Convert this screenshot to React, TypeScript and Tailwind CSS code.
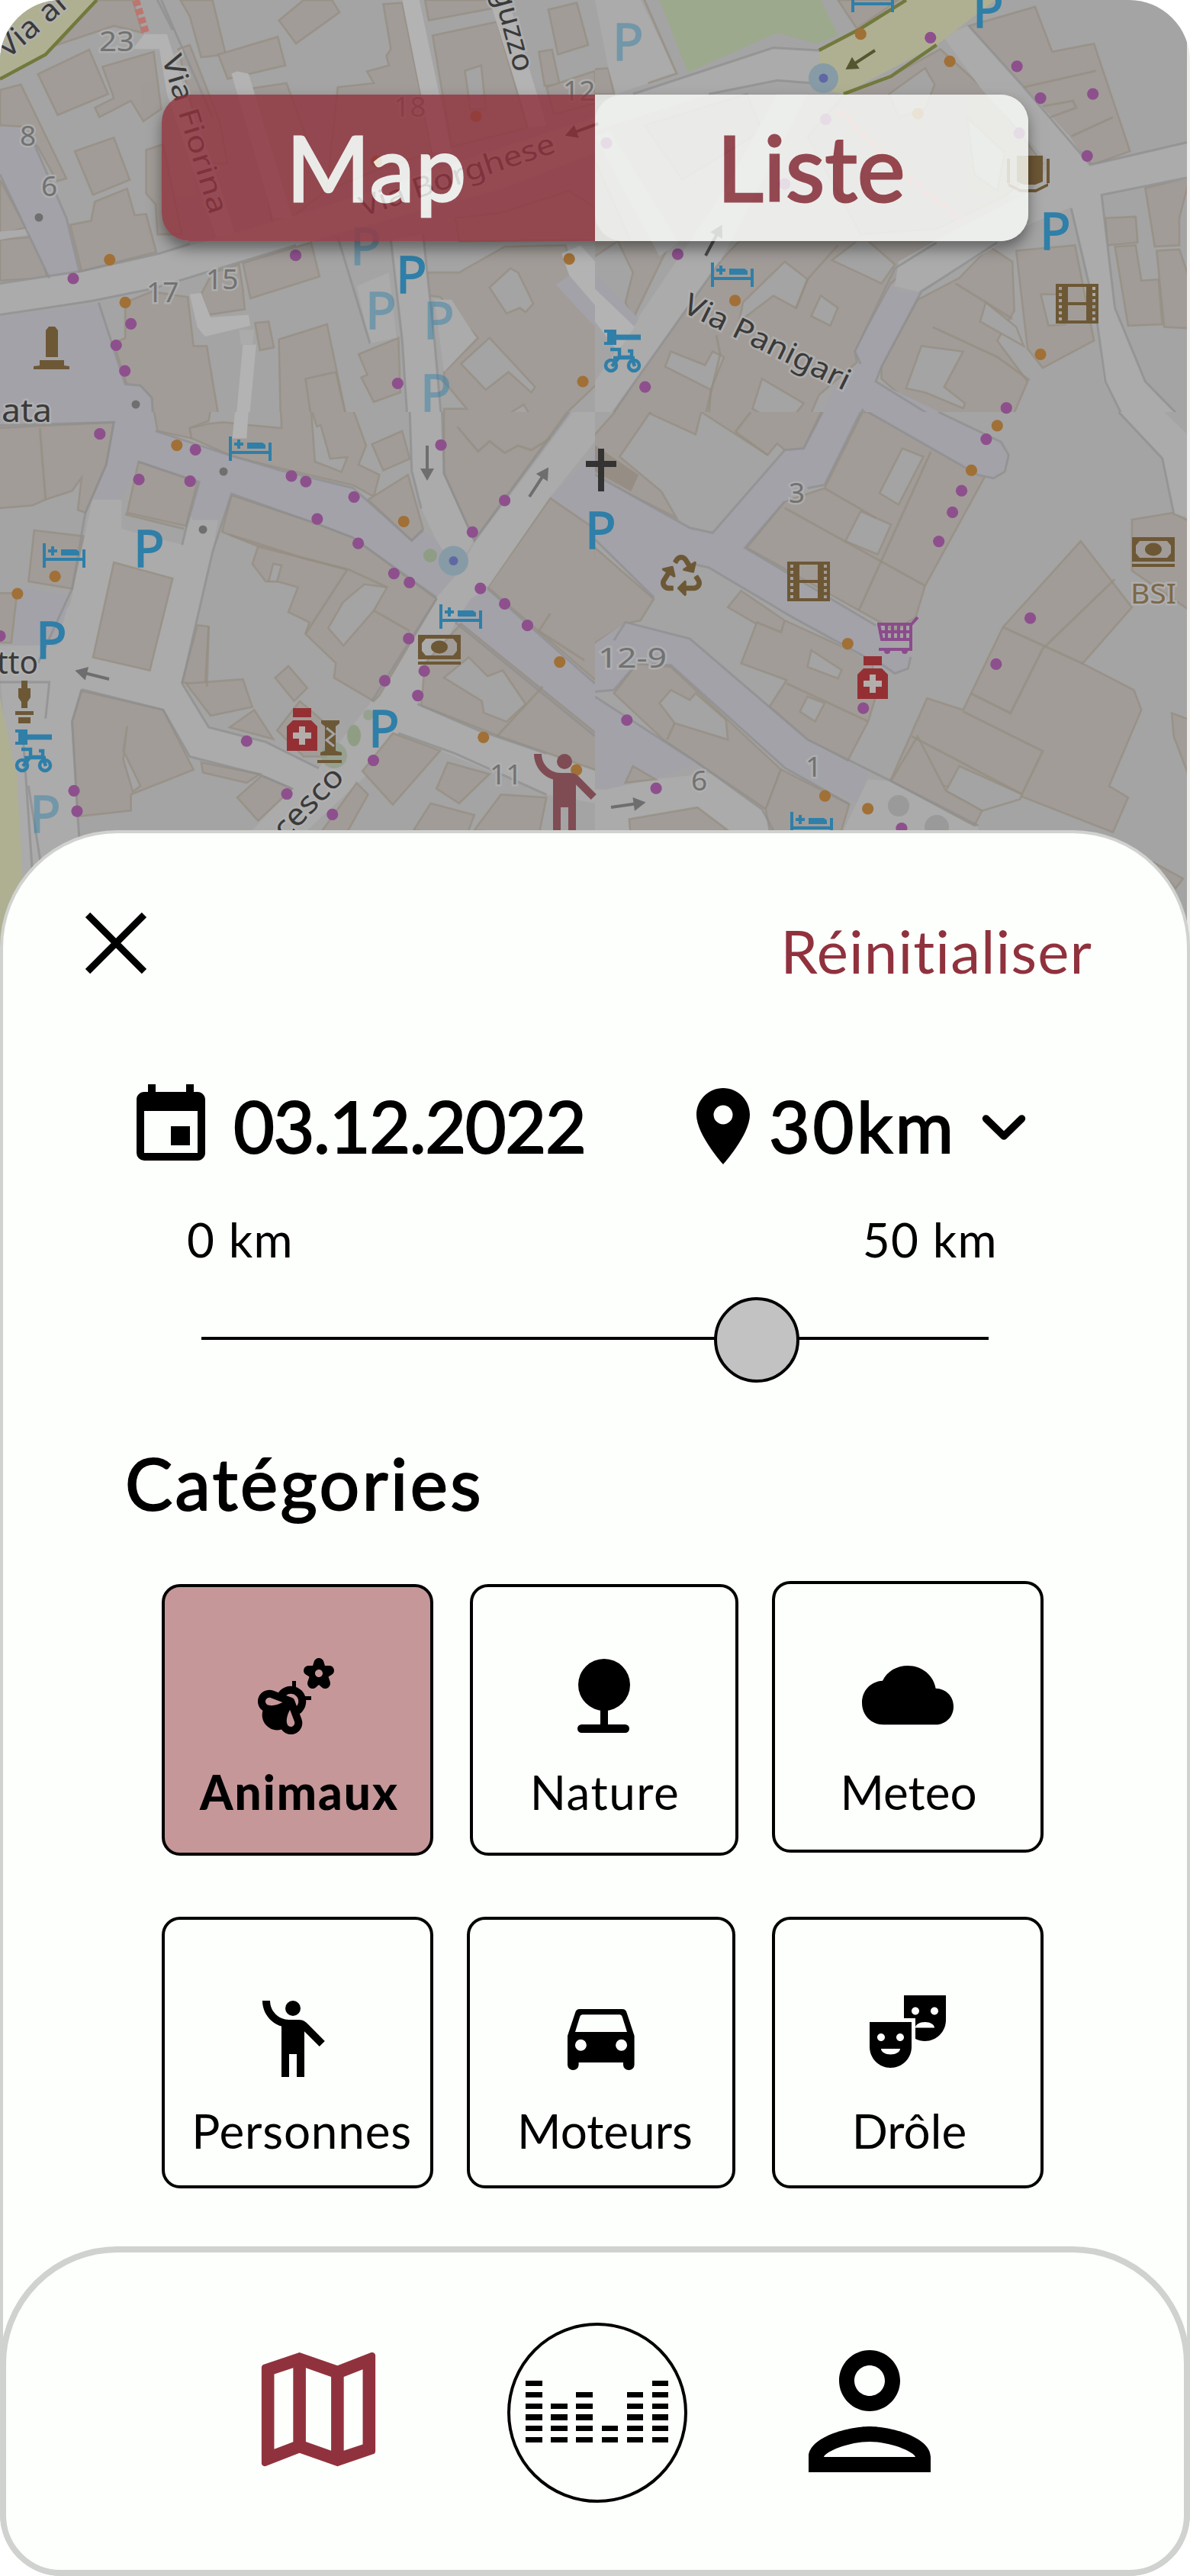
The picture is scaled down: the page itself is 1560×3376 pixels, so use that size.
import type { ReactNode } from "react";
import {
  MdEmojiNature,
  MdEmojiPeople,
  MdEvent,
  MdLocationOn,
  MdOutlineMap,
  MdTheaterComedy,
} from "react-icons/md";
import { FaRecycle } from "react-icons/fa";

/* ---------- map ---------- */

const FILL = {
  building: "#a19c98",
  court: "#a4a4a4",
  road: "#ababab",
  lane: "#b3b3b3",
  square: "#a3a2a9",
  green: "#9ca98c",
  main: "#afb092",
  church: "#968e84",
};
const LINE = { building: "#958d82", square: "#8f8f90", olive: "#72793c" };

type Kind = keyof typeof FILL;
type Pt = [number, number];
type Tile = {
  x: number;
  y: number;
  sx: number;
  sy: number;
  h: number;
  shapes: [Kind, string][];
  lines: [string, string][];
  purple: Pt[];
  orange: Pt[];
};

const S = 780 / 1568;

const tiles: Tile[] = [
  {
    x: 0,
    y: 0,
    sx: S,
    sy: 560 / 1568,
    h: 540,
    shapes: [
      ["building", "100,272 235,182 285,345 152,422"],
      ["building", "270,245 405,190 425,400 378,445 345,370 262,430 250,395 300,360"],
      ["building", "0,330 55,310 175,655 150,665 100,540 60,465 0,460"],
      ["building", "197,555 300,505 342,660 245,715"],
      ["building", "185,825 240,810 250,740 335,692 355,790 385,785 412,925 215,995"],
      ["building", "150,165 255,0 350,0 375,120 300,95"],
      ["building", "475,0 560,0 595,200 530,210 500,60"],
      ["building", "470,180 500,165 580,450 600,600 540,600"],
      ["building", "575,200 732,135 752,240 600,290"],
      ["building", "735,75 800,0 875,0 895,45 780,160"],
      ["building", "660,325 755,305 860,700 720,850"],
      ["building", "890,320 985,305 967,262 1025,240 1018,205 1030,180 1010,15 1060,10 1140,560 1000,620 860,700"],
      ["building", "1130,75 1120,0 1290,0 1300,30"],
      ["building", "1140,130 1310,80 1390,470 1190,540"],
      ["court", "1225,260 1268,240 1280,400 1240,400"],
      ["building", "1445,35 1520,10 1550,165 1470,200"],
      ["building", "1420,190 1455,182 1475,310 1435,315"],
      ["building", "1568,260 1440,320 1460,420 1568,380"],
      ["building", "385,550 430,530 480,860 415,860 410,750 385,710"],
      ["building", "0,660 68,835 0,860"],
      ["building", "0,880 95,868 125,1020 0,1030"],
      ["building", "640,965 820,890 842,1015 660,1095"],
      ["building", "330,1110 400,1070 495,1090 510,1270 545,1270 575,1520 555,1530 555,1580 405,1580 400,1460 370,1415 335,1415 300,1260 330,1240"],
      ["building", "550,1155 530,1080 560,1000 630,970 640,1060 645,1135"],
      ["building", "672,1185 708,1180 722,1275 685,1285"],
      ["building", "735,1245 862,1190 920,1580 740,1580"],
      ["building", "805,1390 885,1365 920,1580 825,1580"],
      ["building", "945,1300 1050,1240 1055,1440 985,1475 952,1385 968,1375"],
      ["building", "1125,1000 1210,1000 1330,905 1490,900 1500,950 1580,1190 1580,1400 1490,1520 1475,1580 1170,1580 1170,1500 1230,1500 1170,1400 1170,1365 1260,1240 1200,1150 1160,1090 1130,1085"],
      ["court", "1290,1055 1345,985 1365,1000 1390,1070 1405,1115 1385,1145 1370,1130 1335,1150"],
      ["court", "1215,1335 1290,1240 1410,1420 1400,1440 1340,1365 1280,1430"],
      ["court", "1345,1515 1380,1485 1400,1530 1370,1568 1345,1550"],
      ["building", "1200,800 1320,780 1500,700 1568,760 1568,880 1210,885"],
      ["square", "0,465 75,480 175,800 210,1010 130,1020 65,830 0,640"],
      ["square", "0,1160 260,1115 330,1410 370,1415 400,1460 405,1568 300,1568 300,1550 0,1550"],
      ["road", "0,1035 210,1000 420,935 850,760 1568,430 1568,560 1330,690 880,860 630,965 400,1060 240,1100 0,1160"],
      ["lane", "350,180 380,125 440,125 490,345 560,600 620,860 570,870 440,345 420,180"],
      ["lane", "610,270 625,262 655,270 770,800 720,800"],
      ["lane", "1060,0 1105,0 1190,560 1140,560"],
      ["lane", "1290,0 1340,0 1440,460 1395,470"],
      ["lane", "500,1080 530,1075 555,1165 655,1155 660,1195 540,1235 520,1200"],
      ["lane", "640,1265 675,1265 655,1568 620,1568"],
      ["road", "630,1210 670,1210 665,1265 635,1265"],
      ["road", "1030,880 1115,860 1145,1250 1165,1568 1075,1568 1060,1250"],
      ["road", "940,1050 1025,1000 1045,1240 975,1260"],
      ["road", "1145,1100 1190,1100 1255,1240 1170,1365"],
      ["square", "1465,1045 1500,1010 1568,1100 1568,1200"],
      ["lane", "1480,930 1530,900 1568,960 1568,1120 1500,1010"],
      ["road", "0,850 75,840 75,860 0,880"],
      ["main", "0,0 255,0 120,200 0,285"],
    ],
    lines: [
      ["olive", "255,0 120,200 0,290"],
      ["square", "0,1040 215,995 420,930 500,895"],
      ["square", "0,1155 240,1105 400,1060 780,900"],
      ["square", "75,480 175,800 210,1000"],
      ["square", "0,640 65,830 130,1020"],
      ["square", "260,1110 330,1410 370,1415 400,1460 405,1568"],
      ["square", "0,1548 300,1550"],
      ["square", "1030,880 1060,1250 1075,1568"],
      ["square", "1115,860 1145,1250 1165,1568"],
      ["square", "415,0 455,110"],
      ["square", "425,0 560,430"],
      ["square", "890,870 975,1260"],
    ],
    purple: [[779, 937], [193, 1022], [345, 1188], [306, 1267], [329, 1361], [1048, 1407]],
    orange: [[289, 953], [330, 1110], [1500, 950], [1536, 1400], [1254, 427], [992, 592]],
  },
  {
    x: 780,
    y: 0,
    sx: S,
    sy: 560 / 1568,
    h: 540,
    shapes: [
      ["green", "170,0 595,0 640,130 585,160 480,120 245,265"],
      ["building", "640,0 800,0 690,105"],
      ["building", "-10,255 35,250 50,345 -10,345"],
      ["road", "0,0 120,0 215,270 55,345 35,250"],
      ["road", "0,370 100,345 470,175 590,185 600,300 480,295 300,345 0,480"],
      ["building", "985,95 1160,25 1205,190 1315,160 1410,555 1310,605 1130,320"],
      ["building", "660,345 780,280 910,180 1040,345 1180,600 1080,720 900,840 700,860 560,500"],
      ["court", "775,345 870,250 895,310 870,400 800,430"],
      ["court", "980,430 1080,560 1060,700 1000,640"],
      ["building", "130,460 400,345 440,480 230,660"],
      ["building", "-10,560 100,900 60,885 -10,950"],
      ["building", "60,885 200,885 100,1170 80,1110 100,1000"],
      ["building", "240,1090 380,885 900,885 780,1040 685,1290 690,1330 590,1450 550,1580 20,1580 150,1300"],
      ["court", "500,960 560,1025 530,1130 470,1085 380,1180 390,1110"],
      ["court", "595,1085 640,1130 620,1195 570,1160"],
      ["court", "720,885 790,970 755,1040 625,955 690,885"],
      ["court", "200,1290 290,1340 310,1290 340,1310 305,1430 185,1345"],
      ["court", "440,1390 550,1480 500,1568 415,1500"],
      ["building", "1040,905 1100,960 1105,1140 1060,1250 1140,1400 1085,1580 910,1580 755,1390 755,1345 850,1100 960,1020"],
      ["court", "1030,1110 1110,1200 1130,1270 1015,1180"],
      ["court", "860,1270 970,1290 920,1420 975,1480 970,1498 870,1440 820,1425"],
      ["building", "1110,920 1265,900 1315,1250 1180,1350 1140,1280"],
      ["court", "1175,1080 1240,1080 1240,1190 1195,1195"],
      ["building", "1345,800 1425,795 1430,890 1350,900"],
      ["building", "1370,905 1425,900 1440,1030 1485,1025 1495,1190 1405,1195"],
      ["building", "1450,690 1568,650 1540,800 1540,900 1475,905"],
      ["building", "1480,920 1540,915 1568,1030 1568,1205 1500,1200"],
      ["road", "915,130 985,95 1250,500 1305,605 1568,520 1568,655 1335,715 1370,1130 1450,1400 1568,1568 1405,1568 1340,1400 1320,1150 1255,760 1150,820 1100,870 850,1070 790,1050 800,960 900,880 1150,700 1200,600 1020,330"],
      ["square", "780,1045 800,1070 860,1070 755,1345 740,1400 935,1530 960,1568 745,1568 705,1505 680,1568 580,1568 640,1400 700,1330 685,1290"],
      ["road", "0,1400 340,700 480,345 560,345 330,960 20,1568 0,1568"],
      ["square", "0,1000 115,1170 95,1220 0,1060"],
      ["lane", "0,1060 105,1200 60,1290 0,1180"],
      ["road", "0,500 40,480 220,890 170,940"],
      ["main", "820,0 1055,0 900,165 655,345 600,330 590,185"],
    ],
    lines: [
      ["olive", "820,0 700,105 590,185"],
      ["olive", "900,165 780,280 655,345"],
      ["square", "100,345 470,175 590,185"],
      ["square", "300,345 480,295 570,305"],
      ["square", "985,95 1130,320 1305,605 1568,520"],
      ["square", "1568,650 1335,715 1370,1130 1450,1400 1568,1568"],
      ["square", "1255,765 1320,1150 1345,1400 1405,1568"],
      ["square", "1060,890 860,1070 755,1345 740,1400 935,1568"],
      ["square", "900,890 790,985 685,1290 700,1335"],
      ["square", "745,1568 705,1505 680,1568"],
      ["square", "330,960 20,1568"],
      ["building", "130,0 215,270 140,305"],
      ["building", "1130,320 1320,260"],
      ["building", "1255,500 1365,430"],
      ["building", "1180,390 1260,370 1268,395 1200,430"],
      ["building", "530,1130 560,1025 640,900"],
      ["building", "320,1230 330,1300 290,1530"],
      ["building", "305,1430 300,1530 350,1568"],
      ["building", "890,1200 1060,1310 1145,1395"],
      ["building", "950,1040 1100,1170"],
    ],
    purple: [[884, 138], [1112, 243], [1174, 360], [1312, 345], [1297, 572], [218, 933], [132, 1420], [1084, 1497], [30, 525], [608, 438], [1118, 488], [500, 675]],
    orange: [[700, 125], [935, 225], [851, 417], [369, 1103], [1174, 1300]],
  },
  {
    x: 0,
    y: 540,
    sx: S,
    sy: 600 / 1568,
    h: 720,
    shapes: [
      ["road", "245,290 320,300 320,400 480,455 500,360 575,370 560,480 480,930 550,1080 700,1130 840,1220 980,990 1100,700 1150,635 1200,560 1250,450 1510,0 1568,0 1568,100 1450,290 1285,600 1200,720 1100,1000 1260,1090 1440,1170 1568,1230 1568,1340 1440,1310 1050,1100 960,1250 810,1432 665,1432 770,1290 680,1240 500,1180 430,1020 215,950 190,1060 205,1390 225,1850 65,1850 0,900 0,800 100,800 185,660"],
      ["road", "1080,0 1165,0 1170,210 1250,440 1200,540 1150,440 1110,330 1085,200"],
      ["square", "300,0 405,0 410,65 610,150 740,200 930,260 1085,440 1115,405 1150,440 1200,560 1150,635 930,430 840,385 610,280 575,370 505,370 525,240 365,170 320,300 245,300 300,30"],
      ["square", "0,0 300,0 300,35 0,48"],
      ["square", "1285,605 1568,930 1568,1110 1200,720 1240,640"],
      ["square", "1450,290 1568,140 1568,400"],
      ["square", "50,600 185,630 150,800 35,795"],
      ["building", "-10,55 300,35 280,180 225,345 205,335 215,225 190,270 120,300 85,320 -10,330"],
      ["building", "365,170 520,240 490,390 335,345"],
      ["building", "90,405 220,425 190,605 75,580"],
      ["building", "-10,620 45,620 30,790 -10,790"],
      ["building", "300,515 455,570 395,885 245,840"],
      ["building", "610,285 840,385 930,430 1150,640 1000,970 985,990 880,910 885,860 805,760 815,720 760,685 785,600 730,580 700,580 665,520 680,460 585,410"],
      ["court", "865,740 905,650 960,590 1020,600 985,680 905,800"],
      ["court", "708,580 720,520 742,525 730,580"],
      ["building", "520,730 550,735 540,940 480,925"],
      ["building", "490,930 640,915 665,1010 555,1040"],
      ["building", "725,910 760,870 810,945 775,990"],
      ["building", "605,1080 670,1020 720,1120"],
      ["building", "730,1090 790,990 870,1080 860,1180 800,1180"],
      ["building", "215,955 430,1020 510,1225 345,1310 345,1365 205,1385 190,1060"],
      ["court", "335,1075 325,1160 370,1280 350,1300 325,1190"],
      ["building", "405,-10 555,-10 550,30 500,55 505,90 415,65"],
      ["building", "740,-10 930,-10 965,115 945,180 1000,215 985,290 930,250 730,190 610,150 505,90 500,55 550,40 590,35 660,45 742,55"],
      ["lane", "620,-10 655,-10 650,90 612,90"],
      ["court", "820,-10 835,50 845,45 870,160 915,155 900,205 830,170"],
      ["building", "980,110 1060,65 1080,160 1010,200"],
      ["building", "970,300 1075,215 1115,400 1085,440"],
      ["building", "1170,-10 1500,-10 1250,440 1170,210"],
      ["building", "1450,295 1568,400 1580,930 1285,600"],
      ["building", "1215,725 1580,1110 1580,1230 1315,1110 1110,1005 1120,860"],
      ["court", "1170,910 1235,840 1285,905 1325,885 1385,1000 1335,1060 1275,1030 1270,990"],
      ["building", "530,1200 685,1240 650,1270 535,1235"],
      ["building", "625,1320 690,1245 770,1290 680,1400"],
      ["building", "955,1230 1035,1100 1160,1160 1035,1345"],
      ["building", "1150,1290 1180,1200 1290,1240 1210,1340"],
      ["building", "1135,1340 1250,1380 1230,1450 1090,1432"],
      ["building", "1320,1310 1440,1320 1420,1450 1250,1432"],
      ["building", "840,1450 940,1270 970,1310 910,1450"],
      ["road", "1510,0 1568,0 1568,100 1450,290 1285,600 1250,450"],
      ["main", "0,980 45,1250 70,1850 0,1850"],
    ],
    lines: [
      ["square", "0,46 300,35 280,180 225,345 190,605 100,860"],
      ["square", "410,65 610,150 740,200 930,260 1085,440 1115,405"],
      ["square", "1150,635 930,430 840,385 610,280 560,480 480,930 550,1080 700,1130 840,1220"],
      ["square", "365,170 525,240 490,400 480,455"],
      ["square", "215,950 430,1020 500,1180 680,1240 770,1290"],
      ["square", "1080,0 1085,200 1110,330"],
      ["square", "1165,0 1170,210 1250,440 1500,0"],
      ["square", "1285,605 1568,930"],
      ["square", "1200,720 1568,1110"],
      ["square", "1150,640 980,990"],
      ["square", "1100,1000 1260,1090 1440,1170"],
      ["square", "1050,1100 1200,1170 1440,1310"],
      ["square", "215,950 190,1060 205,1390 215,1568"],
      ["square", "60,1100 85,1568"],
      ["square", "75,1280 110,1568"],
      ["square", "0,925 130,925 120,1050"],
      ["building", "1205,50 1260,135 1290,100 1330,140 1365,115 1400,130 1450,90"],
      ["building", "105,55 120,300"],
      ["building", "680,460 915,540 805,760"],
      ["building", "985,680 1080,750"],
      ["building", "330,350 485,400"],
      ["building", "605,420 800,500 920,540 1020,600"],
      ["building", "1450,690 1420,750 1540,850"],
      ["building", "1430,940 1310,1110"],
      ["building", "550,735 545,940"],
    ],
    purple: [[263, 75], [515, 129], [366, 231], [501, 237], [768, 219], [806, 238], [933, 291], [836, 366], [944, 450], [1038, 553], [1079, 584], [1162, 113], [1330, 303], [1245, 411], [1266, 604], [1330, 657], [1390, 731], [1077, 776], [1118, 887], [1014, 920], [1101, 971], [650, 1127], [984, 1193], [756, 1308], [876, 1378], [195, 1297], [203, 1367], [0, 767]],
    orange: [[466, 114], [1064, 375], [145, 563], [46, 622], [1475, 856], [1274, 1114], [1519, 1226]],
  },
  {
    x: 780,
    y: 540,
    sx: S,
    sy: 680 / 1568,
    h: 720,
    shapes: [
      ["road", "0,1140 150,1110 320,1090 440,1200 480,1300 0,1300"],
      ["road", "690,1180 720,1110 780,1115 1010,1250 1010,1300 640,1300"],
      ["road", "1380,0 1495,140 1525,305 1568,320 1568,75 1500,0"],
      ["building", "-10,80 60,-10 150,-10 140,10 65,135 175,240 215,320 -10,190"],
      ["church", "0,100 115,190 95,240 0,180"],
      ["building", "150,-10 600,-10 550,110 500,115 480,95 455,130 300,15 280,0 265,68 145,5"],
      ["building", "705,0 720,0 1030,190 870,525 845,620 790,660 400,410 500,270 605,230"],
      ["court", "810,110 865,135 800,280 750,245"],
      ["court", "700,300 740,320 780,340 745,430 660,390"],
      ["building", "350,590 385,540 500,630 730,750 740,860 720,935 665,1055 560,990 460,890 505,810 385,760 425,640"],
      ["court", "570,720 650,780 640,805 560,770"],
      ["court", "560,860 605,880 580,935 540,905"],
      ["building", "-10,400 155,565 120,630 80,640 -10,705"],
      ["building", "1280,390 1415,590 1285,760 1420,840 1440,900 1355,1130 1405,1165 1365,1270 1120,1160 780,1110 875,865 970,900 1075,650"],
      ["court", "925,1145 960,1070 1125,1155 1120,1170 1020,1205"],
      ["building", "925,1145 1020,1205 1000,1250 780,1115 850,980"],
      ["building", "1415,325 1520,305 1568,330 1568,600 1415,480"],
      ["building", "1520,910 1568,930 1568,1110 1525,980"],
      ["building", "50,850 110,760 200,770 490,1080 450,1200 180,990"],
      ["court", "170,880 200,840 250,870 265,850 345,930 350,990 210,940"],
      ["building", "490,1080 670,1185 640,1300 460,1264 450,1200"],
      ["building", "90,1230 270,1195 350,1264 95,1300"],
      ["building", "1470,1360 1550,1410 1530,1440"],
      ["square", "0,190 250,350 310,365 500,115 550,110 600,0 700,0 605,220 560,230 500,270 395,410 740,645 770,700 830,740 815,780 790,790 700,740 520,620 300,470 260,460 155,560 0,385"],
      ["square", "720,0 905,0 1070,90 1090,150 1050,200 1010,190"],
      ["square", "0,700 80,635 250,685 560,990 720,1090 690,1180 500,1075 200,765 110,760 50,840 0,845"],
      ["square", "0,860 270,1060 150,1110 30,1140 0,1140"],
      ["building", "80,1120 100,1070 160,1110"],
    ],
    lines: [
      ["square", "0,190 250,350 310,365 500,115 550,110 600,0"],
      ["square", "905,0 1070,90 1090,130 1080,180 1050,200 1010,190 720,0"],
      ["square", "700,0 605,220 560,230"],
      ["square", "500,270 395,410 740,645"],
      ["square", "260,460 300,470 520,620 720,745"],
      ["square", "740,750 790,790 825,775 832,740"],
      ["square", "0,385 155,560"],
      ["square", "50,690 80,635 250,685 560,990 780,1115 1010,1250"],
      ["square", "670,1185 500,1075 200,765 110,760 50,840 0,845"],
      ["square", "0,860 270,1060 440,1200 470,1264"],
      ["square", "1380,0 1495,140 1525,305"],
      ["building", "1075,650 1285,760"],
      ["building", "1370,505 1180,715 1095,910 990,850"],
      ["building", "970,905 1110,985 1180,1025 1125,1155 835,980"],
      ["building", "500,290 870,525"],
      ["building", "605,230 740,320"],
      ["building", "885,120 695,600"],
      ["building", "370,60 410,0"],
      ["building", "370,60 455,130"],
      ["building", "500,630 490,665 425,635"],
      ["building", "505,820 720,935"],
      ["building", "210,940 190,990"],
    ],
    purple: [[1031, 82], [966, 238], [942, 303], [906, 391], [1147, 623], [1057, 762], [707, 895], [84, 931], [161, 1137], [808, 1258]],
    orange: [[1060, 41], [992, 176], [666, 700], [606, 1160], [719, 1199]],
  },
];

const parking: [number, number, number][] = [
  [524, 384, 1], [464, 347, 0.45], [484, 431, 0.45], [560, 444, 0.45], [556, 539, 0.45],
  [808, 79, 0.45], [1280, 36, 1], [1368, 327, 1], [180, 743, 1], [52, 863, 1],
  [488, 979, 1], [772, 719, 1], [44, 1091, 0.45],
];

const labels: { t: string; x: number; y: number; r?: number; len?: number; c?: string; s?: number }[] = [
  { t: "23", x: 130, y: 67, len: 46 },
  { t: "8", x: 26, y: 191 },
  { t: "6", x: 54, y: 257 },
  { t: "17", x: 192, y: 396 },
  { t: "15", x: 270, y: 379 },
  { t: "18", x: 516, y: 153 },
  { t: "12", x: 738, y: 132 },
  { t: "3", x: 1034, y: 659 },
  { t: "12-9", x: 784, y: 875, len: 90 },
  { t: "11", x: 642, y: 1028 },
  { t: "1", x: 1056, y: 1018 },
  { t: "6", x: 906, y: 1036 },
  { t: "BSI", x: 1482, y: 791, len: 60, c: "#7d684a" },
  { t: "Via Fiorina", x: 212, y: 76, r: 73, len: 216, c: "#3a3a3a" },
  { t: "Via Borghese", x: 476, y: 284, r: -18.5, len: 268, c: "#3a3a3a" },
  { t: "Via Panigari", x: 893, y: 408, r: 26, len: 238, c: "#3a3a3a", s: 39 },
  { t: "guzzo", x: 646, y: -12, r: 75, len: 112, c: "#3a3a3a", s: 39 },
  { t: "Via ar", x: 10, y: 78, r: -41, len: 112, c: "#3a3a3a", s: 39 },
  { t: "ata", x: 2, y: 553, c: "#3a3a3a", s: 42, len: 66 },
  { t: "tto", x: -4, y: 883, c: "#3a3a3a", s: 42, len: 54 },
  { t: "cesco", x: 374, y: 1102, r: -46, len: 114, c: "#3a3a3a", s: 40 },
];

function Bed({ x, y }: { x: number; y: number }) {
  return (
    <g transform={`translate(${x} ${y})`} fill="#2f7fa8">
      <path d="M0 0h4v19h48v-11h4v24h-4v-9H4v9H0z" />
      <path d="M11 4h4v4h4v4h-4v4h-4v-4H7V8h4zM24 8h20l4 3v5H24z" />
    </g>
  );
}

function Film({ x, y }: { x: number; y: number }) {
  return (
    <g transform={`translate(${x} ${y})`}>
      <path
        fill="#6d5836"
        fillRule="evenodd"
        d="M0 0h56v52H0zM16 4v20h24V4zM16 28v20h24V28zM4 4v4h4V4zm0 8v4h4v-4zm0 8v4h4v-4zm0 8v4h4v-4zm0 8v4h4v-4zm0 8v4h4v-4zM48 4v4h4V4zm0 8v4h4v-4zm0 8v4h4v-4zm0 8v4h4v-4zm0 8v4h4v-4zm0 8v4h4v-4z"
      />
    </g>
  );
}

function Banknote({ x, y }: { x: number; y: number }) {
  return (
    <g transform={`translate(${x} ${y})`} fill="#6d5836">
      <path fillRule="evenodd" d="M0 0h56v32H0zM10 5l-5 6v10l5 6h36l5-6V11l-5-6z" />
      <ellipse cx="28" cy="16" rx="11" ry="8.5" />
      <path d="M0 35h56v4H0z" />
    </g>
  );
}

function Scooter({ x, y }: { x: number; y: number }) {
  return (
    <g transform={`translate(${x} ${y})`} fill="none" stroke="#2f7fa8" strokeWidth="4.5">
      <path d="M0 2h16M0 18h16" strokeWidth="4" />
      <path d="M4 10h12" strokeWidth="14" />
      <path d="M14 10h34" strokeWidth="7" />
      <path d="M8 26h12v10h16V28h-5M20 36l-10 12M36 36l4 12M12 37h28" />
      <circle cx="9" cy="47" r="7" />
      <circle cx="39" cy="47" r="7" />
    </g>
  );
}

function Pharmacy({ x, y }: { x: number; y: number }) {
  return (
    <g transform={`translate(${x} ${y})`}>
      <path fill="#943034" d="M8 0h24v12H8zM8 16h24l8 8v32H0V24z" />
      <path fill="#b3aeab" d="M16 24h8v8h8v8h-8v8h-8v-8H8v-8h8z" />
    </g>
  );
}

function Arrow({ x, y, r, c = "#6e6e6e" }: { x: number; y: number; r: number; c?: string }) {
  return (
    <g transform={`translate(${x} ${y}) rotate(${r})`} fill={c}>
      <path d="M0 -2h30v-7l16 9-16 9v-7H0z" />
    </g>
  );
}

function CityMap() {
  return (
    <svg className="absolute left-0 top-0" width="1556" height="1260" viewBox="0 0 1556 1260">
      <rect width="1556" height="1260" fill="#a4a4a4" />
      {tiles.map((t, i) => (
        <g key={i}>
          <clipPath id={`tile-${i}`}>
            <rect x={t.x} y={t.y} width="780" height={t.h} />
          </clipPath>
          <g clipPath={`url(#tile-${i})`}>
            <g transform={`translate(${t.x} ${t.y}) scale(${t.sx} ${t.sy})`}>
              {t.shapes.map(([k, p], j) => (
                <polygon
                  key={j}
                  points={p}
                  fill={FILL[k]}
                  stroke={k === "building" || k === "court" ? LINE.building : "none"}
                  strokeWidth="2.6"
                  strokeOpacity="0.75"
                  vectorEffect="non-scaling-stroke"
                />
              ))}
              {t.lines.map(([k, p], j) => (
                <polyline
                  key={j}
                  points={p}
                  fill="none"
                  stroke={LINE[k as keyof typeof LINE]}
                  strokeWidth={k === "olive" ? 4.5 : 3}
                  strokeOpacity={k === "olive" ? 1 : 0.75}
                  vectorEffect="non-scaling-stroke"
                />
              ))}
            </g>
          </g>
        </g>
      ))}

      <g fill="#8f9d84">
        <circle cx="564" cy="728" r="9" />
        <circle cx="483" cy="937" r="7" opacity="0.7" />
        <ellipse cx="464" cy="964" rx="9" ry="14" />
        <circle cx="438" cy="990" r="17" opacity="0.7" />
      </g>
      <path d="M178 0l14 46" stroke="#bd7570" strokeWidth="10" strokeDasharray="8 4" />
      <path d="M1100 145l75 75 85 68" stroke="#c98a85" strokeWidth="8" strokeDasharray="8 6" fill="none" />
      <circle cx="1178" cy="1056" r="14" fill="#9a9a9a" />
      <circle cx="1228" cy="1084" r="16" fill="#9a9a9a" />

      {[[1079.5, 102.5], [594.5, 735]].map(([x, y]) => (
        <g key={x}>
          <circle cx={x} cy={y} r="19.5" fill="#869ba6" />
          <circle cx={x} cy={y} r="6" fill="#6068a4" />
        </g>
      ))}
      {[[51, 285], [178, 530], [293, 618], [266, 694]].map(([x, y]) => (
        <circle key={x} cx={x} cy={y} r="5.5" fill="#6f6f6f" />
      ))}

      {tiles.map((t, i) => (
        <g key={i}>
          {t.purple.map(([x, y], j) => (
            <circle key={`p${j}`} cx={t.x + x * t.sx} cy={t.y + y * t.sy} r="7.6" fill="#8d508d" />
          ))}
          {t.orange.map(([x, y], j) => (
            <circle key={`o${j}`} cx={t.x + x * t.sx} cy={t.y + y * t.sy} r="7.6" fill="#a17036" />
          ))}
        </g>
      ))}

      <Arrow x={560} y={584} r={90} />
      <Arrow x={694} y={651} r={-57} />
      <Arrow x={143} y={890} r={194} />
      <Arrow x={801} y={1058} r={-8} />
      <Arrow x={1147} y={66} r={147} c="#54562f" />
      <Arrow x={925} y={335} r={-62} c="#4c4c4c" />
      <Arrow x={784} y={162} r={160} c="#3a3a3a" />

      <Bed x={932} y={344} />
      <Bed x={1116} y={-16} />
      <Bed x={300} y={572} />
      <Bed x={56} y={712} />
      <Bed x={576} y={792} />
      <Bed x={1036} y={1064} />
      <Film x={1384} y={372} />
      <Film x={1032} y={736} />
      <Banknote x={548} y={832} />
      <Banknote x={1484} y={704} />
      <Scooter x={792} y={432} />
      <Scooter x={20} y={956} />
      <Pharmacy x={376} y={928} />
      <Pharmacy x={1124} y={860} />
      <FaRecycle x={866} y={727} size={54} color="#6d5836" />
      <g fill="#6d5836">
        <path d="M64 428h8l4 5v35H60v-35zM52 472h32v7l7 1v4H44v-4l8-1z" />
        <path d="M421 944h24v4l-5 4v32l8 2v4h-28v-4l6-2v-32l-5-4zM416 996h32v4h-32z" />
        <path d="M28 892h8v10h4v12l-4 6v8h-8v-8l-4-6v-12h4zM20 932h24v5H20zM24 940h16v8H24z" />
        <path d="M1333 204h34v34l-10 4h-14l-10-4zM1320 208h4v32h-4zM1372 208h4v32h-4zM1322 240l16 8h20l16-8v4l-16 8h-20l-16-8z" />
      </g>
      <path d="M428 954l10 8-10 8 10 8" stroke="#a4a4a4" strokeWidth="3" fill="none" />
      <g fill="none" stroke="#8b4c8c" strokeWidth="4">
        <path d="M1203 809l-9 10v25v7h-42M1150 818h44M1152 818l4 20h36M1162 818v20M1170 818v20M1178 818v20M1186 818v20M1152 828h42" />
        <circle cx="1163" cy="853" r="2" />
        <circle cx="1186" cy="853" r="2" />
      </g>
      <path fill="#333" d="M784 588h8v16h16v8h-16v32h-8v-32h-16v-8h16z" />

      <g style={{ fontFamily: '"Noto Sans", sans-serif' }}>
        {parking.map(([x, y, o], i) => (
          <text key={i} x={x - 5} y={y} fontSize="67" fill="#2f7fa8" stroke="#2f7fa8" strokeWidth="1.6" opacity={o}>
            P
          </text>
        ))}
        {labels.map((l, i) => (
          <text
            key={i}
            transform={`translate(${l.x} ${l.y}) rotate(${l.r ?? 0})`}
            fontSize={l.s ?? 37}
            fill={l.c ?? "#727272"}
            stroke="#b2b2b2"
            strokeWidth="5"
            strokeOpacity="0.8"
            paintOrder="stroke"
            textLength={l.len}
            lengthAdjust="spacingAndGlyphs"
          >
            {l.t}
          </text>
        ))}
      </g>
      <MdEmojiPeople x={680} y={978} size={120} color="#7f4c54" />
    </svg>
  );
}

/* ---------- controls ---------- */

function ViewToggle() {
  return (
    <div className="relative mx-[212px] flex h-[192px] rounded-[36px] opacity-80 shadow-[0_10px_18px_rgba(0,0,0,0.5)]">
      <div className="flex w-1/2 justify-center rounded-l-[36px] bg-[#90323d] pt-[36px] text-[118px] leading-none text-[#fdfffc] [-webkit-text-stroke:3px_#fdfffc]">
        <span className="-ml-[4px] tracking-[1.5px]">Map</span>
      </div>
      <div className="w-1/2 rounded-r-[36px] bg-[#f0f1ee]">
        <div className="flex h-full justify-center rounded-[36px] bg-[#fdfffc] pt-[36px] text-[118px] leading-none text-[#90323d] [-webkit-text-stroke:3px_#90323d]">
          <span className="-ml-px tracking-[0.5px]">Liste</span>
        </div>
      </div>
    </div>
  );
}

function Tree() {
  return (
    <svg width="70" height="98" viewBox="0 0 70 98">
      <circle cx="35" cy="34" r="34" />
      <path d="M30 60h10v30H30z" />
      <rect x="0" y="86" width="68" height="11" rx="5.5" />
    </svg>
  );
}

function Cloud() {
  return (
    <svg width="120" height="78" viewBox="0 0 120 78">
      <path d="M28 77.3C12 77 0 65 0 48.500C0 33 11 20.500 27 19.700C33 7 46 0 60 0C79 0 94 13 96.600 29.700C110 30 120 40 120 53.500C120 67 110 77 97 77.300Z" />
    </svg>
  );
}

function Car() {
  return (
    <svg width="88" height="80" viewBox="0 0 88 80">
      <path
        fillRule="evenodd"
        d="M16 0H71.600Q76.500 0 77.700 5L87.600 35V73a7.300 7 0 0 1-14.600 0V70H14.600V73a7.300 7 0 0 1-14.600 0V35L10 5Q11.200 0 16 0ZM19.500 7.300Q17 7.300 16.200 10L10 30H78L71.700 10Q70.900 7.300 68.500 7.300ZM17.400 39.800a7.500 7.500 0 1 0 0 15a7.500 7.500 0 1 0 0-15ZM70.600 39.800a7.500 7.500 0 1 0 0 15a7.500 7.500 0 1 0 0-15Z"
      />
    </svg>
  );
}

type CardProps = { label: string; icon: ReactNode; box: string; text?: string };

function Card({ label, icon, box, text = "" }: CardProps) {
  return (
    <div className={`flex h-[356px] flex-col items-center rounded-[24px] border-4 border-black ${box}`}>
      {icon}
      <span className={`mt-auto text-[62px] leading-none ${text}`}>{label}</span>
    </div>
  );
}

function Categories() {
  return (
    <div className="ml-[208px] mt-[82px] flex flex-col gap-[80px]">
      <div className="flex items-end">
        <Card
          label="Animaux"
          box="w-[356px] bg-[#c69799] pb-[49px] pt-[83px]"
          text="ml-[5px] font-black tracking-[2px]"
          icon={<MdEmojiNature size={120} className="-ml-[5px]" />}
        />
        <Card label="Nature" box="ml-[48px] w-[352px] pb-[49px] pt-[94px]" icon={<Tree />} text="ml-[2px] tracking-[1.5px]" />
        <Card label="Meteo" box="mb-[4px] ml-[44px] w-[356px] pb-[45px] pt-[107px]" icon={<Cloud />} text="ml-[2px]" />
      </div>
      <div className="flex">
        <Card
          label="Personnes"
          box="w-[356px] pb-[41px] pt-[96px]"
          text="ml-[11px] tracking-[0.8px]"
          icon={<MdEmojiPeople size={120} className="-ml-[12px]" />}
        />
        <Card label="Moteurs" box="ml-[44px] w-[352px] pb-[41px] pt-[117px]" icon={<Car />} text="ml-[10px]" />
        <Card label="Drôle" box="ml-[48px] w-[356px] pb-[41px] pt-[84px]" icon={<MdTheaterComedy size={120} />} text="ml-[4px]" />
      </div>
    </div>
  );
}

const levels = [6, 4, 5, 2, 5, 6];

function BottomNav() {
  return (
    <nav className="-mx-[4px] -mb-[4px] mt-auto flex h-[432px] rounded-b-[80px] rounded-t-[154px] border-8 border-[#d0d2cf] bg-[#fdfffc]">
      <MdOutlineMap size={199} color="#90323d" className="ml-[310px] mt-[106px]" />
      <div className="ml-[148px] mt-[92px] flex h-[236px] w-[236px] items-end gap-[11.7px] rounded-full border-4 border-black pb-[75px] pl-[20px]">
        {levels.map((n, i) => (
          <div key={i} className="flex w-[21.5px] flex-col gap-[7.55px]">
            {Array.from({ length: n }, (_, j) => (
              <div key={j} className="h-[7.2px] bg-black" />
            ))}
          </div>
        ))}
      </div>
      <svg className="ml-[119px] mt-[88px]" width="240" height="240" viewBox="0 0 24 24">
        <path d="M12 6c1.100 0 2 .9 2 2s-.9 2-2 2-2-.9-2-2 .9-2 2-2m0 10c2.700 0 5.800 1.290 6 2H6c.23-.72 3.310-2 6-2m0-12C9.790 4 8 5.790 8 8s1.790 4 4 4 4-1.790 4-4-1.790-4-4-4zm0 10c-2.670 0-8 1.340-8 4v2h16v-2c0-2.660-5.330-4-8-4z" />
      </svg>
    </nav>
  );
}

function FilterSheet() {
  return (
    <section className="relative mt-[772px] flex h-[2288px] flex-col rounded-b-[80px] rounded-t-[154px] border-4 border-[#d0d2cf] bg-[#fdfffc] text-black">
      <div className="flex h-[184px] justify-between pl-[108px] pr-[124px] pt-[104px]">
        <svg width="80" height="80" viewBox="0 0 80 80">
          <path d="M3 3l74 74M77 3L3 77" stroke="#000" strokeWidth="9" />
        </svg>
        <span className="mt-[11px] text-[78px] leading-none tracking-[1.1px] text-[#90323d]">Réinitialiser</span>
      </div>

      <div className="mt-[140px] flex h-[120px] pl-[160px]">
        <div className="flex w-[724px]">
          <MdEvent size={120} />
          <span className="ml-[22px] mt-[13px] text-[93px] leading-none tracking-[-1.4px] [-webkit-text-stroke:2px_#000]">
            03.12.2022
          </span>
        </div>
        <MdLocationOn size={120} />
        <span className="mt-[13px] w-[279px] text-[93px] leading-none tracking-[3.5px] [-webkit-text-stroke:2px_#000]">30km</span>
        <svg className="mt-[44px]" width="58" height="36" viewBox="0 0 58 36" fill="none">
          <path d="M5.500 6L29 29L52.500 6" stroke="#000" strokeWidth="9.500" strokeLinecap="round" strokeLinejoin="round" />
        </svg>
      </div>

      <div className="mt-[57px] flex h-[62px] justify-between pl-[241px] pr-[248px] text-[62px] leading-none tracking-[1.4px]">
        <span>0 km</span>
        <span>50 km</span>
      </div>

      <div className="relative ml-[260px] mt-[45px] h-[112px] w-[1032px] pt-[52px]">
        <div className="h-[4px] bg-black" />
        <div className="absolute left-[672px] top-0 h-[112px] w-[112px] rounded-full border-4 border-black bg-[#c2c2c2]" />
      </div>

      <h2 className="ml-[160px] mt-[85px] h-[93px] text-[93px] leading-none tracking-[3.4px] [-webkit-text-stroke:2px_#000]">
        Catégories
      </h2>
      <Categories />
      <BottomNav />
    </section>
  );
}

export default function App() {
  return (
    <div className="bg-white">
      <main className="relative h-[3376px] w-[1560px] overflow-hidden rounded-[80px] bg-[#eeebe8] pt-[124px] font-['Lato',sans-serif]">
        <CityMap />
        <ViewToggle />
        <FilterSheet />
      </main>
    </div>
  );
}
